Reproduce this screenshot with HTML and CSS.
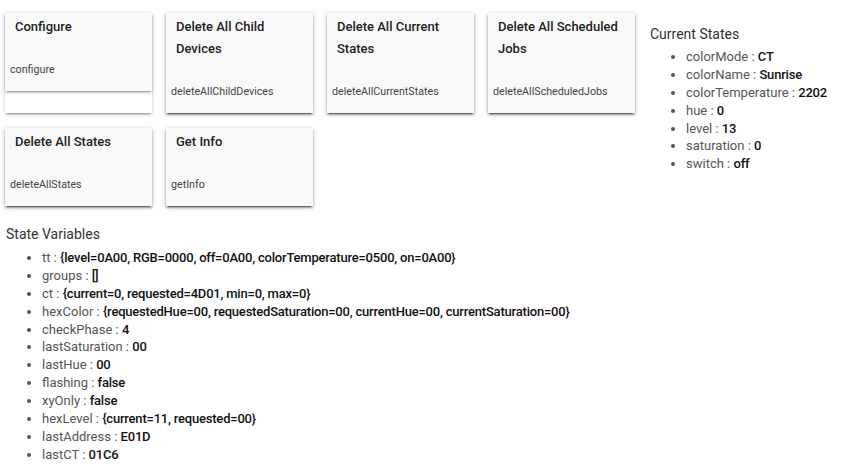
FILE: index.html
```html
<!DOCTYPE html>
<html>
<head>
<meta charset="utf-8">
<link rel="stylesheet" href="styles.css">
</head>
<body>
<div class="top">
  <div class="cards">
    <div class="cell">
      <div class="card">
        <div class="title">Configure</div>
        <div class="cmd">configure</div>
      </div>
    </div>
    <div class="cell">
      <div class="card">
        <div class="title">Delete All Child Devices</div>
        <div class="cmd">deleteAllChildDevices</div>
      </div>
    </div>
    <div class="cell">
      <div class="card">
        <div class="title">Delete All Current States</div>
        <div class="cmd">deleteAllCurrentStates</div>
      </div>
    </div>
    <div class="cell">
      <div class="card">
        <div class="title">Delete All Scheduled Jobs</div>
        <div class="cmd">deleteAllScheduledJobs</div>
      </div>
    </div>
    <div class="cell">
      <div class="card">
        <div class="title">Delete All States</div>
        <div class="cmd">deleteAllStates</div>
      </div>
    </div>
    <div class="cell">
      <div class="card">
        <div class="title">Get Info</div>
        <div class="cmd">getInfo</div>
      </div>
    </div>
  </div>
  <div class="current">
    <div class="heading">Current States</div>
    <ul class="list">
      <li>colorMode : <b>CT</b></li>
      <li>colorName : <b>Sunrise</b></li>
      <li>colorTemperature : <b>2202</b></li>
      <li>hue : <b>0</b></li>
      <li>level : <b>13</b></li>
      <li>saturation : <b>0</b></li>
      <li>switch : <b>off</b></li>
    </ul>
  </div>
</div>
<div class="statevars">
  <div class="heading">State Variables</div>
  <ul class="list">
    <li>tt : <b>{level=0A00, RGB=0000, off=0A00, colorTemperature=0500, on=0A00}</b></li>
    <li>groups : <b>[]</b></li>
    <li>ct : <b>{current=0, requested=4D01, min=0, max=0}</b></li>
    <li>hexColor : <b>{requestedHue=00, requestedSaturation=00, currentHue=00, currentSaturation=00}</b></li>
    <li>checkPhase : <b>4</b></li>
    <li>lastSaturation : <b>00</b></li>
    <li>lastHue : <b>00</b></li>
    <li>flashing : <b>false</b></li>
    <li>xyOnly : <b>false</b></li>
    <li>hexLevel : <b>{current=11, requested=00}</b></li>
    <li>lastAddress : <b>E01D</b></li>
    <li>lastCT : <b>01C6</b></li>
  </ul>
</div>
</body>
</html>
```

FILE: styles.css
```css
html, body {
  margin: 0;
  padding: 0;
  background: #ffffff;
  font-family: Roboto, "Liberation Sans", sans-serif;
  color: #555;
}

.top {
  display: flex;
  align-items: flex-start;
}

.cards {
  display: grid;
  grid-template-columns: repeat(4, 147px);
  column-gap: 14px;
  row-gap: 15px;
  padding: 13px 0 0 5px;
}

.cell {
  display: flex;
  flex-direction: column;
  background: #fff;
  box-shadow: 0 2px 2px rgba(0,0,0,.14), 0 3px 1px -2px rgba(0,0,0,.2), 0 1px 5px rgba(0,0,0,.12);
}

.card {
  background: #f9f9f9;
  box-shadow: 0 2px 2px rgba(0,0,0,.14), 0 3px 1px -2px rgba(0,0,0,.2), 0 1px 5px rgba(0,0,0,.12);
  padding: 3px 0 13px;
}

.title {
  padding: 0 10px;
  font-size: 13px;
  font-weight: 500;
  line-height: 22px;
  color: #222;
}

.cmd {
  margin-top: 24px;
  padding: 0 5px;
  font-size: 10.7px;
  line-height: 16px;
  color: #444;
}

.current {
  margin-left: 15px;
  padding-top: 24px;
}

.heading {
  font-size: 14px;
  line-height: 20px;
  color: #333;
}

.list {
  margin: 4px 0 0;
  padding-left: 36px;
  font-size: 13px;
  line-height: 17.875px;
  color: #555;
}

.statevars .list {
  margin-top: 5px;
}

.list b {
  font-weight: 500;
  letter-spacing: -0.2px;
  color: #111;
}

.statevars {
  padding: 18px 0 0 6px;
}
```
